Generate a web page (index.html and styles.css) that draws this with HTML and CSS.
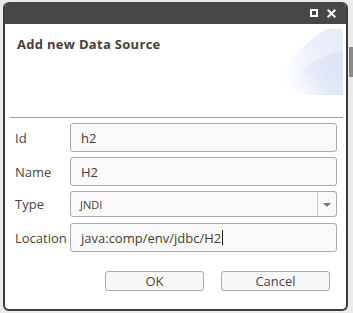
FILE: index.html
```html
<!DOCTYPE html>
<html lang="en">

<head>
    <meta charset="UTF-8">
    <link rel="stylesheet" href="styles.css">
</head>

<body>
    <div class="page">
        <div class="dialog">
            <div class="titlebar">
                <span class="tb-icon max"></span>
                <svg class="tb-icon close" width="9" height="9" viewBox="0 0 9 9">
                    <path d="M0.7 0.7 L8.3 8.3 M8.3 0.7 L0.7 8.3" stroke="#fff" stroke-width="2" />
                </svg>
            </div>
            <div class="header">
                <h2>Add new Data Source</h2>
                <svg class="deco" width="73" height="66" viewBox="0 0 73 66">
                    <defs>
                        <linearGradient id="g1" x1="0" y1="0.8" x2="1" y2="0.3">
                            <stop offset="0" stop-color="#ffffff" stop-opacity="0" />
                            <stop offset="0.6" stop-color="#eef1fa" />
                            <stop offset="1" stop-color="#e7ecf8" />
                        </linearGradient>
                        <linearGradient id="g2" x1="0" y1="0.8" x2="1" y2="0.4">
                            <stop offset="0" stop-color="#ffffff" stop-opacity="0" />
                            <stop offset="0.55" stop-color="#e5eaf7" />
                            <stop offset="1" stop-color="#dde3f4" />
                        </linearGradient>
                    </defs>
                    <path d="M2 66 C14 38 34 12 57 0 L73 0 L73 66 Z" fill="url(#g1)" />
                    <path d="M12 66 C24 46 42 28 73 22 L73 66 Z" fill="url(#g2)" />
                </svg>
            </div>
            <div class="divider"></div>
            <div class="form">
                <div class="row">
                    <label>Id</label>
                    <div class="field">h2</div>
                </div>
                <div class="row">
                    <label>Name</label>
                    <div class="field">H2</div>
                </div>
                <div class="row select-row">
                    <label>Type</label>
                    <div class="field select">
                        <span class="value">JNDI</span>
                        <span class="arrow"></span>
                    </div>
                </div>
                <div class="row">
                    <label>Location</label>
                    <div class="field">java:comp/env/jdbc/H2<span class="caret"></span></div>
                </div>
            </div>
            <div class="buttons">
                <button class="ok">OK</button>
                <button class="cancel">Cancel</button>
            </div>
        </div>
        <div class="side">
            <div class="thumb"></div>
        </div>
    </div>
</body>

</html>
```

FILE: styles.css
```css
body {
    margin: 0;
    background-color: #ebebeb;
    font-family: 'Open Sans', sans-serif;
    font-size: 13px;
    color: #4a4441;
}

.page {
    display: flex;
    padding: 2px 0 0 3px;
    height: 313px;
    box-sizing: border-box;
}

.dialog {
    width: 346px;
    height: 309px;
    box-sizing: border-box;
    border: 2px solid #3c3c3c;
    border-top: none;
    border-radius: 6px;
    background-color: #fff;
    overflow: hidden;
    display: flex;
    flex-direction: column;
}

.titlebar {
    height: 22px;
    background-color: #474747;
    display: flex;
    justify-content: flex-end;
    align-items: center;
    gap: 9px;
    padding-right: 12px;
    margin: 0 -2px;
}

.tb-icon {
    display: block;
}

.tb-icon.max {
    width: 8px;
    height: 8px;
    border: 2px solid #fff;
    box-sizing: border-box;
}

.header {
    height: 93px;
    display: flex;
    justify-content: space-between;
    align-items: flex-start;
}

.header h2 {
    margin: 11px 0 0 12px;
    font-size: 13px;
    font-weight: bold;
    letter-spacing: 0.3px;
    color: #4a4039;
}

.deco {
    margin-top: 5px;
    margin-right: 3px;
}

.divider {
    height: 1px;
    background-color: #a3a3a3;
    margin: 0 3px 0 5px;
}

.form {
    display: flex;
    flex-direction: column;
    gap: 5px;
    padding: 5px 9px 0 10px;
}

.row {
    display: flex;
    align-items: center;
}

.row label {
    width: 55px;
}

.field {
    width: 267px;
    height: 29px;
    box-sizing: border-box;
    border: 1px solid #aaa;
    border-radius: 3px;
    background-color: #f9f9f9;
    padding-left: 10px;
    display: flex;
    align-items: center;
    color: #4d3c30;
}

.select-row {
    margin-bottom: 1px;
}

.field.select {
    height: 26px;
    padding-left: 9px;
    font-size: 11px;
    justify-content: space-between;
}

.select .arrow {
    width: 18px;
    height: 100%;
    border-left: 1px solid #c4c4c4;
    position: relative;
}

.select .arrow::after {
    content: "";
    position: absolute;
    left: 5px;
    top: 11px;
    border-left: 4px solid transparent;
    border-right: 4px solid transparent;
    border-top: 4px solid #777;
}

.caret {
    display: inline-block;
    width: 1px;
    height: 15px;
    background-color: #222;
    margin-left: 1px;
}

.buttons {
    display: flex;
    justify-content: flex-end;
    gap: 17px;
    padding: 19px 16px 0 0;
}

.buttons button {
    height: 20px;
    border: 1px solid #aaa;
    border-radius: 3px;
    background-color: #f8f8f8;
    font-family: 'Open Sans', sans-serif;
    font-size: 13px;
    color: #4a4441;
    padding: 0;
}

.ok {
    width: 99px;
}

.cancel {
    width: 109px;
}

.side {
    width: 4px;
    margin-left: 1px;
    padding-top: 45px;
}

.thumb {
    height: 30px;
    background-color: #8a8a8a;
}
```
